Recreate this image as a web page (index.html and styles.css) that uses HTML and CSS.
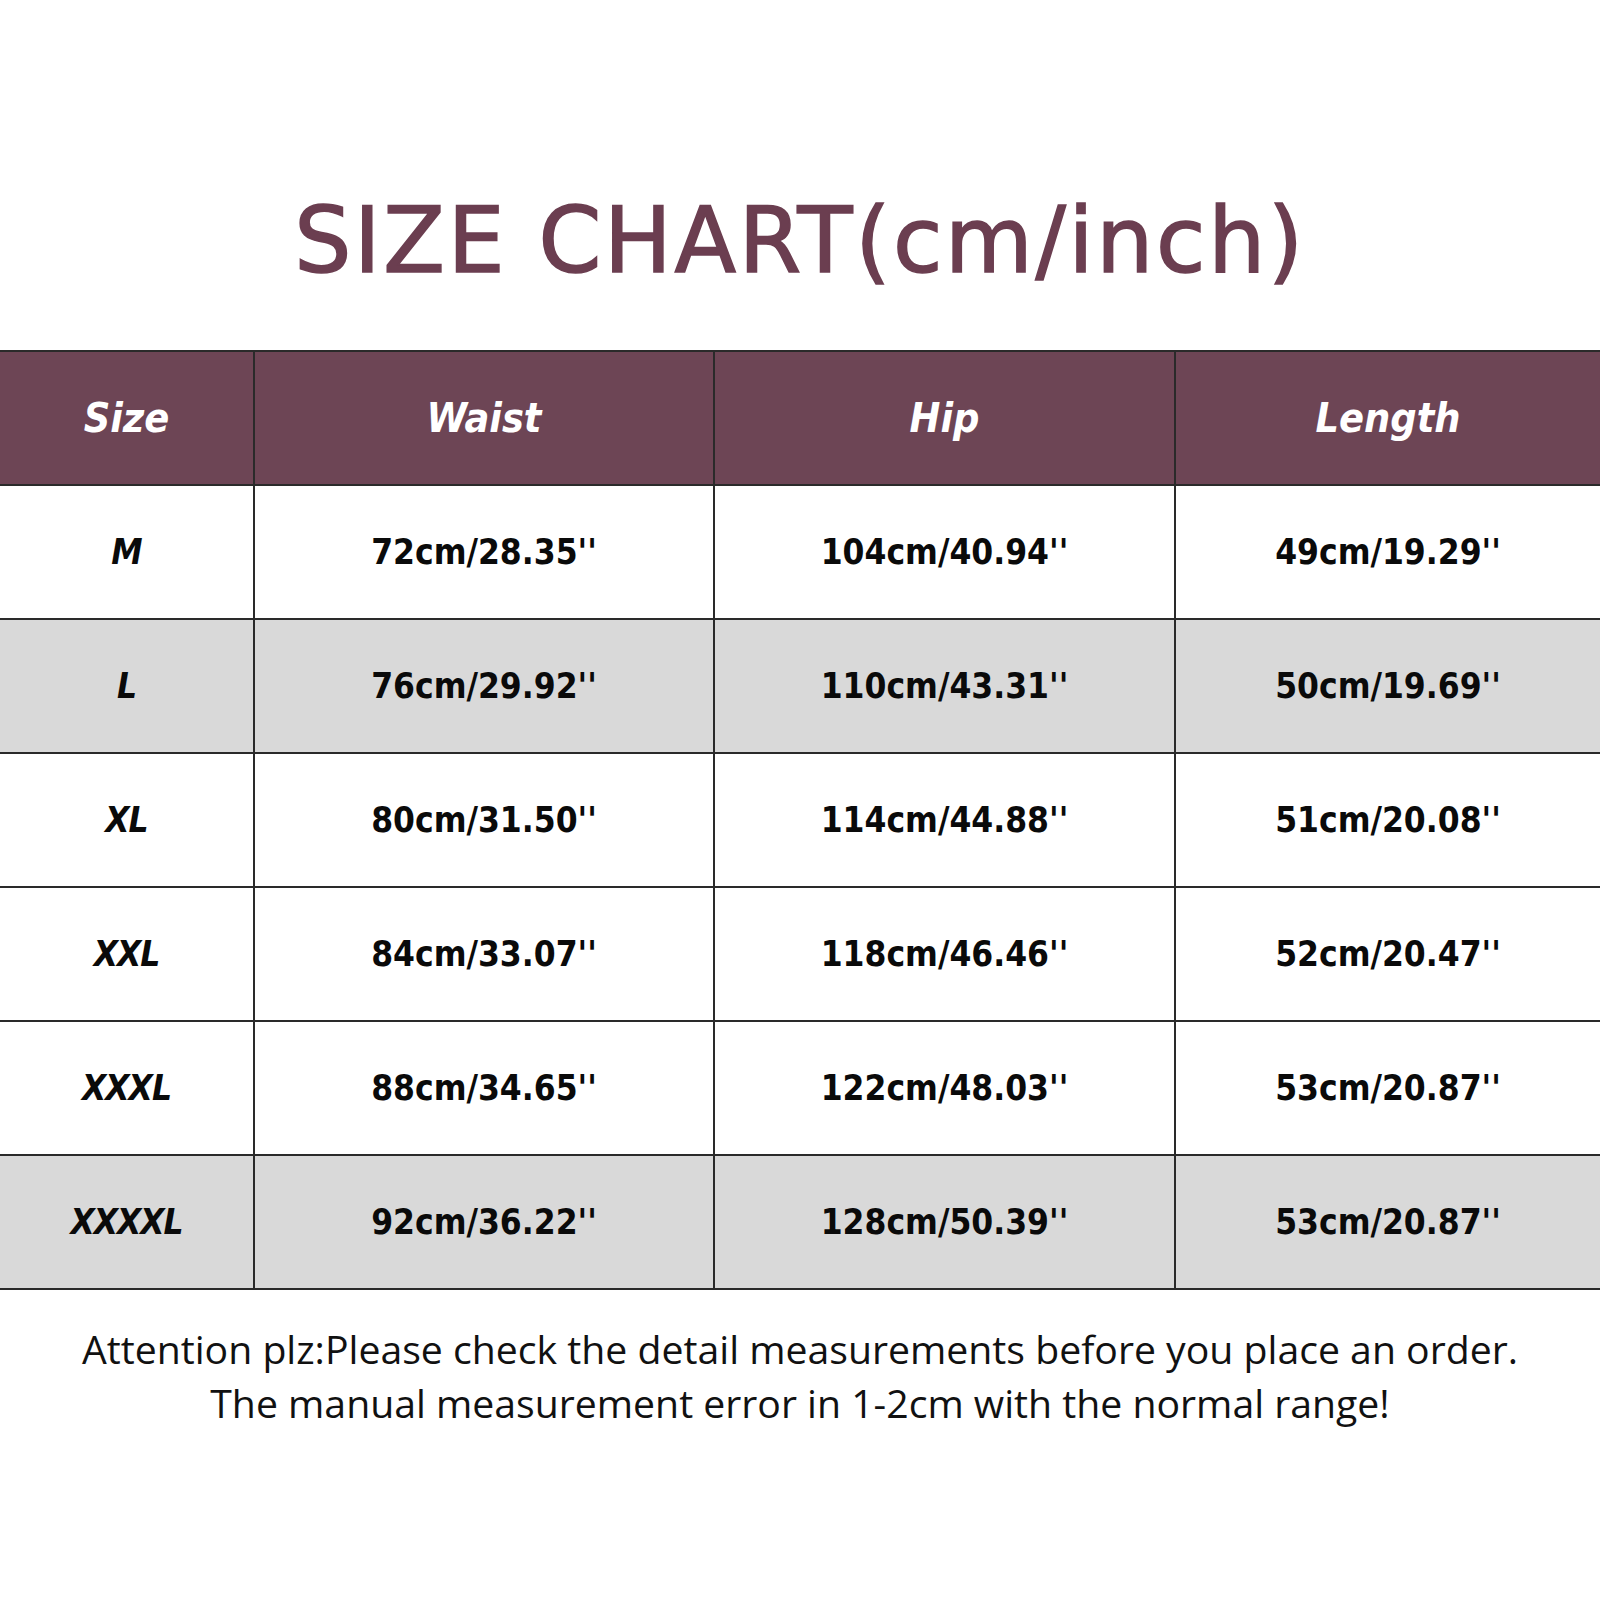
FILE: index.html
```html
<!DOCTYPE html>
<html lang="en">
<head>
<meta charset="utf-8">
<title>Size Chart</title>
<link rel="stylesheet" href="styles.css">
</head>
<body>
<div class="page">
  <h1 class="title">SIZE CHART(cm/inch)</h1>
  <table class="chart">
    <colgroup>
      <col class="c-size"><col class="c-waist"><col class="c-hip"><col class="c-length">
    </colgroup>
    <thead>
      <tr><th>Size</th><th>Waist</th><th>Hip</th><th>Length</th></tr>
    </thead>
    <tbody>
      <tr><td class="sz">M</td><td>72cm/28.35''</td><td>104cm/40.94''</td><td>49cm/19.29''</td></tr>
      <tr class="alt"><td class="sz">L</td><td>76cm/29.92''</td><td>110cm/43.31''</td><td>50cm/19.69''</td></tr>
      <tr><td class="sz">XL</td><td>80cm/31.50''</td><td>114cm/44.88''</td><td>51cm/20.08''</td></tr>
      <tr><td class="sz">XXL</td><td>84cm/33.07''</td><td>118cm/46.46''</td><td>52cm/20.47''</td></tr>
      <tr><td class="sz">XXXL</td><td>88cm/34.65''</td><td>122cm/48.03''</td><td>53cm/20.87''</td></tr>
      <tr class="alt"><td class="sz">XXXXL</td><td>92cm/36.22''</td><td>128cm/50.39''</td><td>53cm/20.87''</td></tr>
    </tbody>
  </table>
  <p class="note">Attention plz:Please check the detail measurements before you place an order.<br>The manual measurement error in 1-2cm with the normal range!</p>
</div>
</body>
</html>
```

FILE: styles.css
```css
html, body {
  margin: 0;
  padding: 0;
  background: #ffffff;
}

.page {
  width: 1600px;
  height: 1600px;
  overflow: hidden;
}

.title {
  margin: 0;
  padding-top: 196px;
  height: 154px;
  text-align: center;
  font-family: "DejaVu Sans", sans-serif;
  font-weight: normal;
  font-size: 90px;
  line-height: 90px;
  letter-spacing: 2.7px;
  color: #6b3e50;
  -webkit-text-stroke: 1.6px #6b3e50;
}

.chart {
  width: 1600px;
  table-layout: fixed;
  border-collapse: collapse;
  font-family: "DejaVu Sans Condensed", "DejaVu Sans", sans-serif;
}

.c-size { width: 254px; }
.c-waist { width: 460px; }
.c-hip { width: 461px; }
.c-length { width: 425px; }

.chart th,
.chart td {
  height: 132px;
  padding: 0;
  text-align: center;
  vertical-align: middle;
  border: 2px solid #2a2a2a;
}

.chart th:first-child,
.chart td:first-child { border-left: none; }
.chart th:last-child,
.chart td:last-child { border-right: none; }

.chart th {
  background: #6d4555;
  color: #ffffff;
  font-size: 41px;
  font-weight: bold;
  font-style: italic;
}

.chart td {
  color: #0a0a0a;
  font-size: 35px;
  font-weight: bold;
}

.chart td.sz {
  font-style: italic;
  letter-spacing: -1px;
}

.chart tr.alt td {
  background: #d9d9d9;
}

.note {
  margin: 0;
  padding-top: 32px;
  text-align: center;
  font-family: "Open Sans", sans-serif;
  font-size: 39.2px;
  line-height: 54px;
  color: #111111;
}
```
